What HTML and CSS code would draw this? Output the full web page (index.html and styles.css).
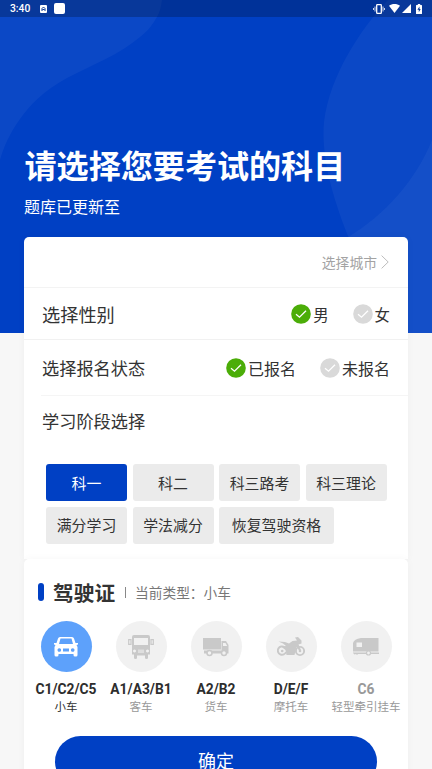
FILE: index.html
```html
<!DOCTYPE html>
<html lang="zh-CN">
<head>
<meta charset="utf-8">
<title>选择科目</title>
<link rel="stylesheet" href="styles.css">
</head>
<body>
<svg class="backdrop" viewBox="0 0 432 333" aria-hidden="true">
  <path class="wave" d="M0 0H162C161 7 160 12 157 17C153 24 148 31 140 37C119 55 94 64 67 78C43 91 30 105 20 119C10 133 4 146 0 160Z"/>
  <path class="wave" d="M388 0C360 30 330 75 324 122C320 165 340 215 348 236C360 270 382 305 405 333H432V0Z"/>
  <path class="wave wave-soft" d="M432 140C416 180 385 215 348 237V333H432Z"/>
</svg>
<header class="status">
  <span class="clock">3:40</span>
  <svg class="notice" viewBox="0 0 7 8"><rect width="7" height="8" rx="1" fill="#fff"/><path d="M2 6V3.5L3.5 2L5 3.500V6M2.500 4.500H4.500" fill="none" stroke="#043494"/></svg>
  <span class="app-square"></span>
  <svg class="vibrate" viewBox="0 0 12 10" fill="none" stroke="#fff"><rect x="3.7" y=".7" width="4.6" height="8.6" rx=".6" stroke-width="1.3"/><path d="M2 2.5V7.5M10 2.5V7.5" opacity=".8"/><path d="M.5 4V6M11.5 4V6" opacity=".8"/></svg>
  <svg class="wifi" viewBox="0 0 11 9"><path d="M0 1.8C3 -.5 8 -.5 11 1.8L5.5 9Z" fill="#fff"/></svg>
  <svg class="signal" viewBox="0 0 9 9"><path d="M9 0V9H0Z" fill="#fff"/></svg>
  <svg class="battery" viewBox="0 0 6 10"><path d="M1.8 0H4.2V1H5.4Q6 1 6 1.6V9.4Q6 10 5.4 10H.6Q0 10 0 9.4V1.6Q0 1 .6 1H1.8Z" fill="#fff"/><path d="M3.5 2.5L1.4 5.8H2.8V8.2L4.7 4.9H3.5Z" fill="#043494"/></svg>
</header>
<main>
  <h1>请选择您要考试的科目</h1>
  <p class="subtitle">题库已更新至</p>
  <section class="card form">
    <div class="row city"><span>选择城市</span><svg class="chevron" viewBox="0 0 8 14"><path d="M.6 .6L7.2 7L.6 13.4"/></svg></div>
    <div class="row gender">
      <span class="label large">选择性别</span>
      <span class="option"><svg class="check on" viewBox="0 0 20 20"><circle cx="10" cy="10" r="9.8"/><path d="M5 10.2L8.5 13.2L15 6.7"/></svg>男</span>
      <span class="option"><svg class="check" viewBox="0 0 20 20"><circle cx="10" cy="10" r="9.8"/><path d="M5 10.2L8.5 13.2L15 6.7"/></svg>女</span>
    </div>
    <div class="row enroll">
      <span class="label">选择报名状态</span>
      <span class="option"><svg class="check on" viewBox="0 0 20 20"><circle cx="10" cy="10" r="9.8"/><path d="M5 10.2L8.5 13.2L15 6.7"/></svg>已报名</span>
      <span class="option"><svg class="check" viewBox="0 0 20 20"><circle cx="10" cy="10" r="9.8"/><path d="M5 10.2L8.5 13.2L15 6.7"/></svg>未报名</span>
    </div>
    <div class="row stage"><span class="label">学习阶段选择</span></div>
    <div class="tags">
      <span class="tag active">科一</span><span class="tag">科二</span><span class="tag">科三路考</span><span class="tag">科三理论</span>
      <span class="tag">满分学习</span><span class="tag">学法减分</span><span class="tag wide">恢复驾驶资格</span>
    </div>
  </section>
  <section class="card license">
    <div class="heading"><i class="bar"></i><h2>驾驶证</h2><i class="divider"></i><span class="current">当前类型：小车</span></div>
    <div class="types">
      <div class="type selected">
        <span class="disc"><svg viewBox="0 0 26 24"><path fill-rule="evenodd" d="M7 2H19Q20.5 2 21 3.5L22.5 8H25V9.5L23.5 10L24.5 12V20Q24.5 21.5 23 21.5H22Q20.5 21.5 20.5 20V19H5.500V20Q5.500 21.500 4 21.500H3Q1.500 21.500 1.500 20V12L2.500 10L1 9.500V8H3.500L5 3.500Q5.500 2 7 2ZM7.500 3.500L6 9H20L18.500 3.500ZM6.300 13.200A1.800 1.800 0 1 0 6.310 13.200ZM19.700 13.200A1.800 1.800 0 1 0 19.710 13.200ZM10 13.500V16.500H16V13.500Z"/></svg></span>
        <b>C1/C2/C5</b><small>小车</small>
      </div>
      <div class="type">
        <span class="disc"><svg viewBox="0 0 26 24"><path fill-rule="evenodd" d="M6 0H20Q22 0 22 2V19.500H20V23Q20 24 18.500 24Q17 24 17 23V20.500H9V23Q9 24 7.500 24Q6 24 6 23V19.500H4V2Q4 0 6 0ZM6 3V10H20V3ZM6.500 14.500A1.500 1.500 0 1 0 6.510 14.500ZM19.500 14.500A1.500 1.500 0 1 0 19.510 14.500Z"/><path d="M.7 4.700H3V9.300H.7ZM23 4.700H25.300V9.300H23Z" fill="none" stroke="currentColor" stroke-width="1.200"/><rect x="10" y="14.500" width="6" height="3.500" fill="#dedede"/></svg></span>
        <b>A1/A3/B1</b><small>客车</small>
      </div>
      <div class="type">
        <span class="disc"><svg viewBox="0 0 26 24"><path d="M0 3H18V14.500H0Z"/><path fill-rule="evenodd" d="M18.500 6H23L25.500 10V18.500H18.500ZM20 8V11H24.200L22.500 8Z"/><path d="M1 15.500H18.500V18.500H1Z"/><g fill="#f1f1f1" stroke="currentColor" stroke-width="1.500"><circle cx="6.500" cy="18" r="2.500"/><circle cx="21" cy="18" r="2.500"/></g></svg></span>
        <b>A2/B2</b><small>货车</small>
      </div>
      <div class="type">
        <span class="disc"><svg class="moto" viewBox="0 0 28 24"><g fill="none" stroke="currentColor" stroke-width="1.900"><path d="M7.500 12.200A4.200 4.200 0 1 0 9 17"/><circle cx="23" cy="16" r="4.100"/></g><circle cx="5.200" cy="16" r="1.300"/><circle cx="23" cy="16" r="1.300"/><path d="M1.500 6.500L8 7L12 8.500L15.500 6L20 5.500L18 2.500L21 2L24.500 5.500V8.500L21.500 9.500L24 15L22.500 16L19.500 12L17.500 20H9.500L8.500 15L4 11.500L9 11L6 8.500Z"/></svg></span>
        <b>D/E/F</b><small>摩托车</small>
      </div>
      <div class="type disabled">
        <span class="disc"><svg viewBox="0 0 26 24"><path fill-rule="evenodd" d="M8 3H25.500V16.500H0V8Q1 4 8 3ZM3.500 7.500V12H9V7.500Z"/><path d="M0 17.500H26V19H5L4 20L3 19L1.500 19.500L0 18Z"/><circle cx="15.500" cy="18" r="2" fill="#f1f1f1" stroke="currentColor" stroke-width="1.200"/></svg></span>
        <b>C6</b><small>轻型牵引挂车</small>
      </div>
    </div>
    <button class="confirm">确定</button>
  </section>
</main>
</body>
</html>
```
FILE: styles.css
```css
* { box-sizing: border-box; }
body {
  margin: 0;
  height: 769px;
  overflow: hidden;
  position: relative;
  background: #f7f7f7;
  color: #333;
  font-family: Roboto, "Noto Sans CJK SC", sans-serif;
}
svg { display: block; flex: none; }
h1, h2, p { margin: 0; }
.backdrop {
  position: absolute;
  inset: 0 0 auto;
  width: 432px;
  height: 333px;
  background: #0040c4;
  z-index: -1;
}
.wave { fill: #fff; fill-opacity: .045; }
.wave-soft { fill-opacity: .04; }

.status {
  height: 17px;
  display: flex;
  align-items: center;
  padding: 0 10px;
  background: rgba(0, 0, 0, .22);
  color: #fff;
}
.clock { font-size: 10.300px; font-weight: 500; line-height: 17px; width: 30px; }
.notice { width: 7px; height: 8px; }
.app-square { width: 11px; height: 11px; margin-left: 7px; border-radius: 2px; background: #fff; }
.vibrate { width: 12px; height: 10px; margin-left: auto; }
.wifi { width: 11px; height: 9px; margin-left: 4px; }
.signal { width: 9px; height: 9px; margin-left: 2px; }
.battery { width: 6px; height: 10px; margin-left: 5px; }

h1 {
  margin: 127px 0 0 24.500px;
  height: 46px;
  line-height: 46px;
  font-size: 32.100px;
  font-weight: 700;
  color: #fff;
}
.subtitle {
  margin: 6px 0 0 24px;
  height: 24px;
  line-height: 24px;
  font-size: 16px;
  color: #fff;
}
.card {
  margin: 0 24px;
  background: #fff;
  border-radius: 5px;
  box-shadow: 0 0 8px rgba(0, 0, 0, .035);
}
.form { margin-top: 17px; height: 322px; border-radius: 5px 5px 0 0; }
.row {
  display: flex;
  align-items: center;
  padding: 0 18px;
}
.city {
  height: 51px;
  justify-content: flex-end;
  gap: 4px;
  padding-right: 19px;
  color: #a3a3a3;
  font-size: 13.800px;
  border-bottom: 1px solid #f3f3f3;
}
.chevron { width: 8px; height: 14px; fill: none; stroke: #bdbdbd; stroke-width: 1; }
.gender { height: 52px; border-bottom: 1px solid #f1f1f1; }
.enroll { height: 56px; margin-left: 17px; padding-left: 1px; border-bottom: 1px solid #f5f5f5; }
.stage { height: 51px; padding-bottom: 2px; }
.label { margin-right: auto; font-size: 17.200px; }
.enroll .label { padding-bottom: 1px; }
.label.large { font-size: 18.200px; }
.option {
  display: flex;
  align-items: center;
  gap: 2px;
  margin-left: 24px;
  font-size: 15.800px;
}
.gender .option { font-size: 15.400px; }
.enroll .option { font-size: 16px; }
.check { width: 20px; height: 20px; fill: #d9d9d9; }
.check.on { fill: #4bad08; }
.check path { fill: none; stroke: #fff; stroke-width: 1.300; }
.tags {
  display: grid;
  grid-template-columns: repeat(4, 81px);
  grid-auto-rows: 37px;
  gap: 5.500px;
  padding: 17px 22px 0;
}
.tag {
  display: flex;
  align-items: center;
  justify-content: center;
  padding-bottom: 1px;
  border-radius: 3px;
  background: #ebebeb;
  font-size: 14.900px;
  white-space: nowrap;
}
.tag.active { background: #0040c4; color: #fff; }
.tag.wide { width: 115px; }

.license { height: 240px; padding-top: 18px; }
.heading { display: flex; align-items: center; height: 30px; padding-left: 14px; }
.bar { width: 6px; height: 18px; border-radius: 3px; background: #0040c4; }
h2 { margin-left: 9px; font-size: 20.700px; font-weight: 700; }
.divider { width: 1px; height: 11px; margin: 0 9.500px; background: #888; }
.current { font-size: 13.700px; color: #777; }
.types { display: flex; margin: 14px 0 0 4.500px; }
.type {
  width: 75px;
  flex: none;
  display: flex;
  flex-direction: column;
  align-items: center;
  color: #c9c9c9;
}
.disc {
  display: flex;
  align-items: center;
  justify-content: center;
  width: 51px;
  height: 51px;
  border-radius: 50%;
  background: #f1f1f1;
}
.disc svg { width: 26px; height: 24px; fill: currentColor; }
.disc .moto { width: 28px; }
.selected .disc { background: #5da1fb; color: #fff; }
.type b { margin-top: 8px; line-height: 19px; font-size: 13.800px; font-weight: 700; color: #2d2d2d; }
.type small { line-height: 17px; font-size: 11.500px; color: #999; white-space: nowrap; }
.selected small { color: #333; }
.disabled b { color: #999; }
.confirm {
  display: block;
  width: 322px;
  height: 51px;
  margin: 20px 0 0 31px;
  padding: 0;
  border: 0;
  border-radius: 26px;
  background: #0040c4;
  color: #fff;
  font: 18px/51px Roboto, "Noto Sans CJK SC", sans-serif;
}
```
